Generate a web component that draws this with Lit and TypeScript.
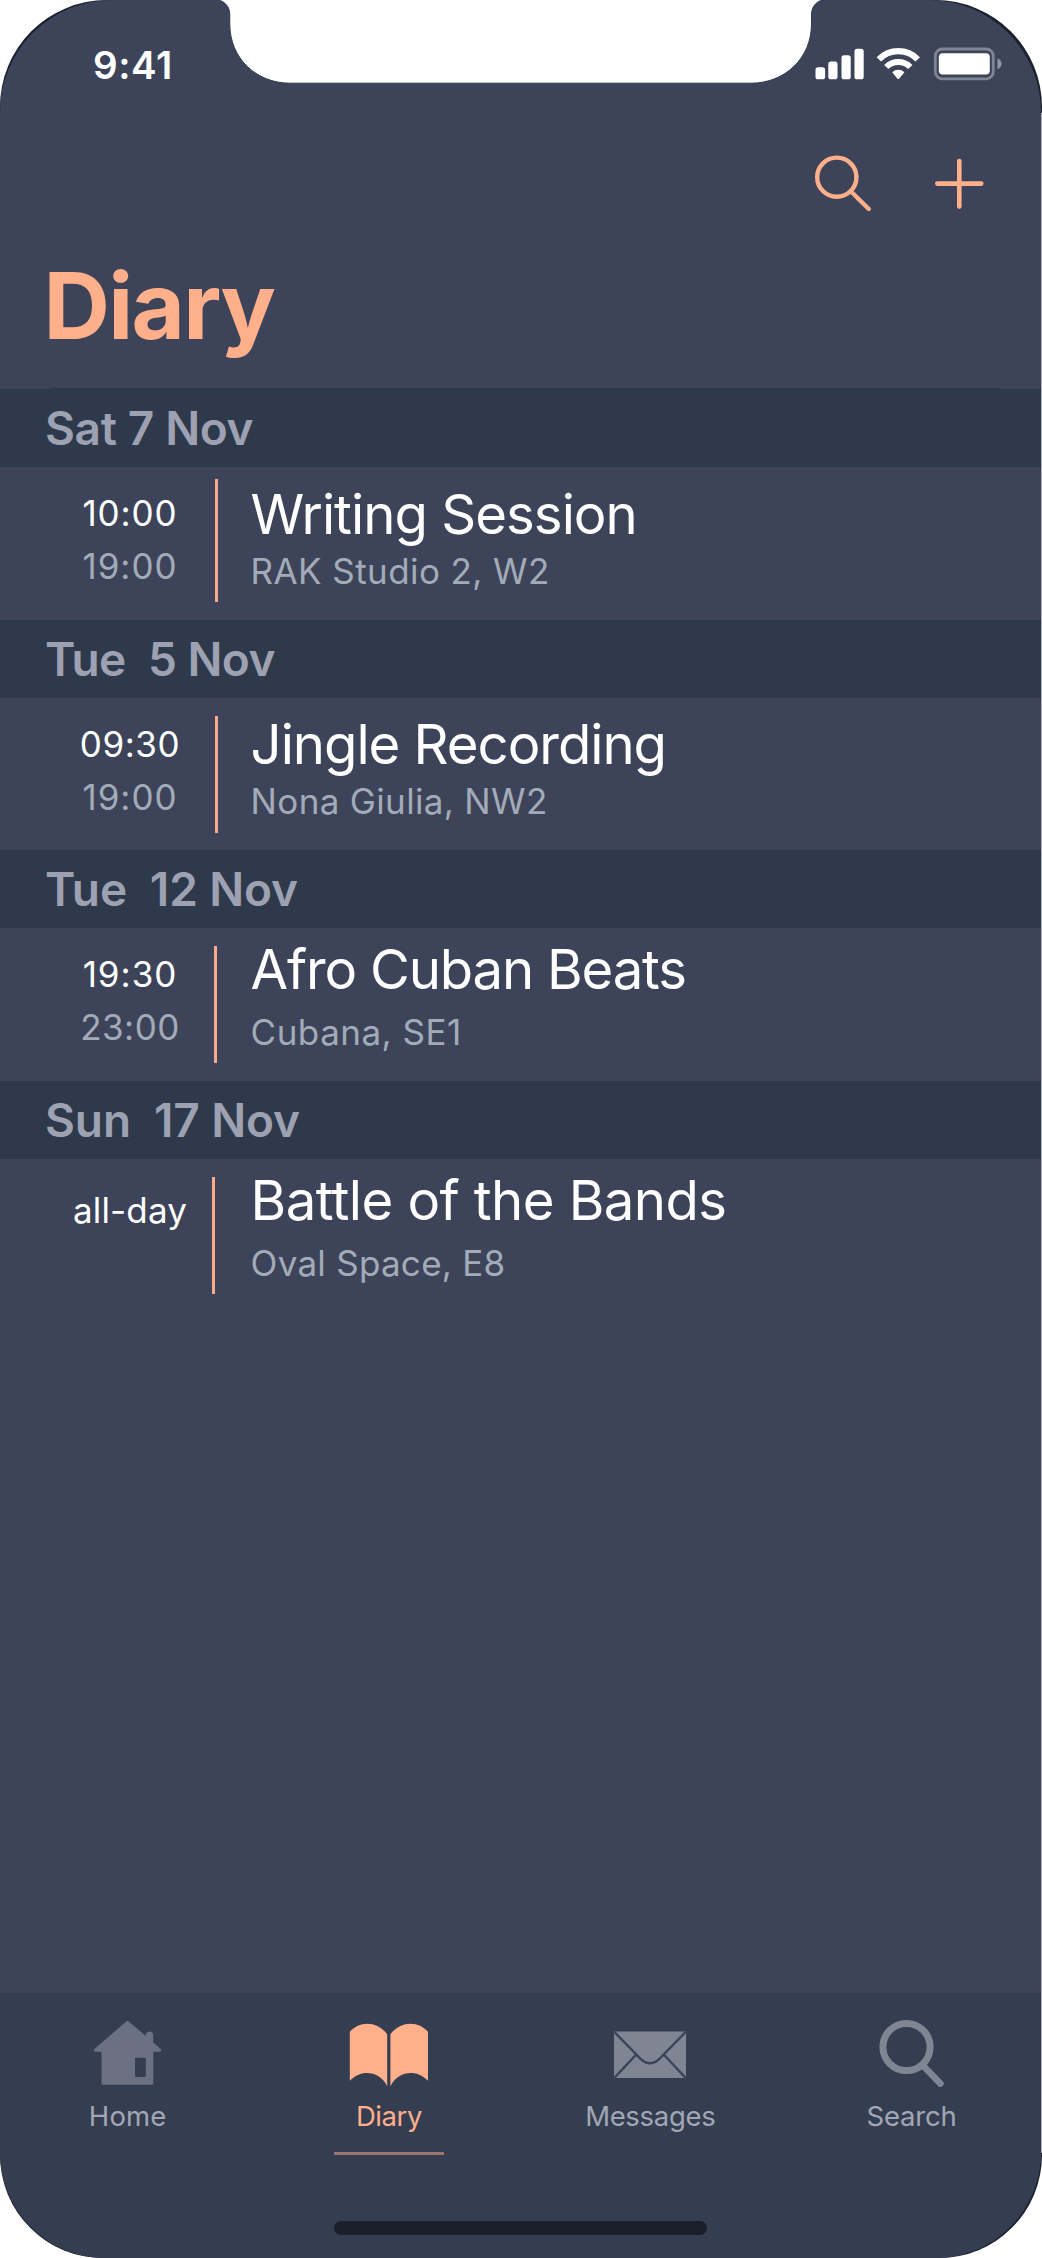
import { LitElement, html, css, svg } from "lit";
import { customElement, property } from "lit/decorators.js";
import { styleMap } from "lit/directives/style-map.js";

interface Label {
  text: string;
  /** letter spacing in px */
  track: number;
}

interface Entry {
  kind: "tall" | "first-tue" | "second-tue" | "all-day";
  date: Label;
  times: Label[];
  title: Label;
  place: Label;
}

const ENTRIES: Entry[] = [
  {
    kind: "tall",
    date: { text: "Sat 7 Nov", track: -0.34 },
    times: [{ text: "10:00", track: 0.9 }, { text: "19:00", track: 1 }],
    title: { text: "Writing Session", track: -0.97 },
    place: { text: "RAK Studio 2, W2", track: 0.42 },
  },
  {
    kind: "first-tue",
    date: { text: "Tue  5 Nov", track: -0.52 },
    times: [{ text: "09:30", track: 0.6 }, { text: "19:00", track: 1 }],
    title: { text: "Jingle Recording", track: -1.03 },
    place: { text: "Nona Giulia, NW2", track: 0.34 },
  },
  {
    kind: "second-tue",
    date: { text: "Tue  12 Nov", track: -0.13 },
    times: [{ text: "19:30", track: 1 }, { text: "23:00", track: 0.5 }],
    title: { text: "Afro Cuban Beats", track: -1.18 },
    place: { text: "Cubana, SE1", track: 0.5 },
  },
  {
    kind: "all-day",
    date: { text: "Sun  17 Nov", track: -0.1 },
    times: [{ text: "all-day", track: 0.17 }],
    title: { text: "Battle of the Bands", track: -0.58 },
    place: { text: "Oval Space, E8", track: 0.27 },
  },
];

const tracked = (l: Label) => styleMap({ letterSpacing: `${l.track}px` });

@customElement("status-bar")
export class StatusBar extends LitElement {
  static styles = css`
    :host {
      display: flex;
      justify-content: space-between;
      height: 60px;
      padding: 40px 35px 0 93px;
    }
    .time {
      font-size: 38.5px;
      line-height: 50px;
      font-weight: 600;
      letter-spacing: 0.56px;
      color: #fff;
    }
    svg {
      display: block;
      width: 196px;
      height: 40px;
      margin-top: 4px;
    }
  `;
  render() {
    return html`
      <span class="time">9:41</span>
      <svg viewBox="810 44 196 40" fill="#fff">
        <rect x="815.5" y="67.3" width="9.6" height="12" rx="2.6" />
        <rect x="828.3" y="61.5" width="9.2" height="17.8" rx="2.6" />
        <rect x="841.5" y="55.3" width="9.2" height="24" rx="2.6" />
        <rect x="854.5" y="48.7" width="9.2" height="30.6" rx="2.6" />
        <g fill="none" stroke="#fff">
          <path d="M878.9 59.3 A27.2 27.2 0 0 1 917.7 59.3" stroke-width="6.2" />
          <path d="M886.3 67 A16.9 16.9 0 0 1 910.3 67" stroke-width="6" />
        </g>
        <path d="M892.2 72.2 A9 9 0 0 1 904.4 72.2 L899.3 78.4 Q898.3 79.4 897.3 78.4 Z" />
        <rect x="935.3" y="49" width="58" height="29.8" rx="7" fill="none" stroke="#7f8594" stroke-width="2.8" />
        <rect x="938.8" y="53.2" width="51" height="21.4" rx="4" />
        <path d="M997.5 58.6 Q1001.5 60 1001.5 63.8 Q1001.5 67.6 997.5 69.2 Z" fill="#9397a4" />
      </svg>
    `;
  }
}

@customElement("diary-header")
export class DiaryHeader extends LitElement {
  static styles = css`
    :host {
      display: flex;
      flex-direction: column;
      height: 289px;
      color: #ffaf89;
    }
    .tools {
      display: flex;
      justify-content: flex-end;
      gap: 59px;
      padding: 50px 50px 0 0;
      height: 70px;
    }
    svg {
      display: block;
      width: 60px;
      height: 66px;
      fill: none;
      stroke: currentColor;
      stroke-linecap: round;
    }
    h1 {
      margin: 36px 0 0 43.6px;
      font-size: 92px;
      line-height: 100px;
      font-weight: 700;
      letter-spacing: -1.67px;
    }
    .divider {
      height: 1px;
      margin: auto 41px 0 50px;
      background: #2e394b;
    }
  `;
  render() {
    return html`
      <div class="tools">
        <svg viewBox="812 150 60 66" stroke-width="4.4">
          <circle cx="836.8" cy="177.2" r="19.6" />
          <path d="M851.5 192 L868.8 209" />
        </svg>
        <svg viewBox="931 150 60 66" stroke-width="4.6">
          <path d="M937.3 183.6 H981.3 M959.3 161 V206.6" />
        </svg>
      </div>
      <h1>Diary</h1>
      <div class="divider"></div>
    `;
  }
}

@customElement("diary-entry")
export class DiaryEntry extends LitElement {
  @property({ attribute: false }) entry!: Entry;
  static styles = css`
    :host {
      display: block;
    }
    .date {
      height: 78px;
      padding-left: 45px;
      background: #2e394b;
      color: #9da1b1;
      font-size: 46px;
      line-height: 78px;
      font-weight: 600;
      white-space: pre;
    }
    .body {
      display: grid;
      grid-template-columns: 140px 50.6px 1fr;
      padding-left: 60px;
      height: 153px;
    }
    .first-tue {
      height: 152px;
    }
    .times {
      padding-top: 19.5px;
      text-align: center;
      font-size: 35px;
      line-height: 53px;
      color: #a3abb8;
    }
    .times div:first-child {
      color: #fff;
    }
    .all-day .times {
      padding-top: 24.5px;
    }
    .rule {
      width: 3px;
      height: 117px;
      margin: 18px 0 0 15px;
      background: #fbab87;
    }
    .tall .rule {
      height: 123px;
      margin-top: 12px;
    }
    .second-tue .rule {
      margin-left: 14px;
    }
    .all-day .rule {
      margin-left: 12px;
    }
    .text {
      padding-top: 17px;
    }
    .first-tue .text {
      padding-top: 16px;
    }
    .second-tue .text,
    .all-day .text {
      padding-top: 11.4px;
    }
    .title {
      font-size: 54.5px;
      line-height: 60px;
      color: #fff;
      white-space: nowrap;
    }
    .place {
      margin-top: 4px;
      font-size: 35px;
      line-height: 46px;
      color: #a3abb8;
    }
    .second-tue .place,
    .all-day .place {
      margin-top: 9.5px;
    }
  `;
  render() {
    const e = this.entry;
    return html`
      <div class="date" style=${tracked(e.date)}>${e.date.text}</div>
      <div class="body ${e.kind}">
        <div class="times">
          ${e.times.map((t) => html`<div style=${tracked(t)}>${t.text}</div>`)}
        </div>
        <div class="rule"></div>
        <div class="text">
          <div class="title" style=${tracked(e.title)}>${e.title.text}</div>
          <div class="place" style=${tracked(e.place)}>${e.place.text}</div>
        </div>
      </div>
    `;
  }
}

const home = svg`
  <path fill="#6b7181" stroke="#6b7181" stroke-width="3" stroke-linejoin="round" fill-rule="evenodd"
    d="M127.5 2022.3 L95.5 2050.2 H103 V2083.2 H151.8 V2050.2 H159.6 L151.7 2043 V2034.5 Q149.5 2031.5 147.3 2034.5 V2039.3 Z" />
  <rect x="135" y="2057.8" width="10.8" height="19.2" rx="0.8" fill="#353d51" />`;

const book = svg`
  <path fill="#ffaf89" d="M349.8 2031.8 C359 2020.8 377 2020.3 387.2 2034.2 V2086.2 C379 2070.3 361 2069.2 349.8 2080.8 Z" />
  <path fill="#ffaf89" d="M428 2031.8 C418.8 2020.8 400.8 2020.3 390.4 2034.2 V2086.2 C398.8 2070.3 416.8 2069.2 428 2080.8 Z" />`;

const mail = svg`
  <rect x="614" y="2031.6" width="72" height="46.4" rx="1.4" fill="#7f8593" />
  <g fill="none" stroke="#3d4459" stroke-width="2.4">
    <path d="M614.6 2032.2 L640.3 2058.6 Q650 2067.8 659.7 2058.6 L685.4 2032.2" />
    <path d="M635.8 2055 L614.6 2077.6 M664.2 2055 L685.4 2077.6" />
  </g>`;

const search = svg`
  <g fill="none" stroke="#7f8593" stroke-linecap="round">
    <circle cx="905.5" cy="2047" r="23.6" stroke-width="7" />
    <path d="M921.5 2065 L939.4 2083.6" stroke-width="6.6" />
  </g>`;

const TABS = [
  { text: "Home", track: 0.16, icon: home, box: "88 2013 80 80", active: false },
  { text: "Diary", track: -0.43, icon: book, box: "349 2013 80 80", active: true },
  { text: "Messages", track: -0.32, icon: mail, box: "610 2013 80 80", active: false },
  { text: "Search", track: -0.2, icon: search, box: "871 2013 80 80", active: false },
];

@customElement("tab-bar")
export class TabBar extends LitElement {
  static styles = css`
    :host {
      display: flex;
      flex-direction: column;
      height: 265px;
      background: #353d51;
    }
    nav {
      display: grid;
      grid-template-columns: repeat(4, 261.3px);
      margin-left: -3px;
    }
    .tab {
      display: flex;
      flex-direction: column;
      align-items: center;
      padding-top: 20px;
      color: #a1a7b4;
      font-size: 27.5px;
      line-height: 40px;
    }
    svg {
      display: block;
      width: 80px;
      height: 80px;
      margin-bottom: 3px;
      overflow: visible;
    }
    .active {
      color: #ffaf89;
    }
    .active::after {
      content: "";
      width: 110px;
      height: 3px;
      margin-top: 16px;
      background: #98766f;
    }
    .indicator {
      width: 373px;
      height: 14px;
      margin: auto auto 23px;
      border-radius: 7px;
      background: #1a1f29;
    }
  `;
  render() {
    return html`
      <nav>
        ${TABS.map(
          (t) => html`<div class="tab ${t.active ? "active" : ""}">
            <svg viewBox=${t.box}>${t.icon}</svg>
            <span style=${tracked(t)}>${t.text}</span>
          </div>`
        )}
      </nav>
      <div class="indicator"></div>
    `;
  }
}

@customElement("app-root")
export class AppRoot extends LitElement {
  static styles = css`
    :host {
      display: block;
      width: 1042px;
      height: 2258px;
      background: #fff;
      font-family: Inter, "Liberation Sans", sans-serif;
    }
    .phone {
      position: relative;
      box-sizing: border-box;
      height: 2258px;
      border-radius: 107px 107px 103px 103px;
      background: #1a202c;
      overflow: hidden;
    }
    .screen {
      display: flex;
      flex-direction: column;
      width: 1041px;
      height: 2258px;
      border-radius: 112px 112px 106px 106px;
      background: #3d4459;
      overflow: hidden;
    }
    .edge {
      position: absolute;
      top: 113px;
      right: 0;
      width: 1px;
      height: 2040px;
      background: #a9acb6;
    }
    .notch {
      position: absolute;
      top: 0;
      left: 210px;
      width: 620px;
      height: 85px;
    }
    tab-bar {
      margin-top: auto;
    }
  `;
  render() {
    return html`
      <div class="phone">
        <div class="screen">
          <status-bar></status-bar>
          <diary-header></diary-header>
          ${ENTRIES.map((e) => html`<diary-entry .entry=${e}></diary-entry>`)}
          <tab-bar></tab-bar>
        </div>
        <div class="edge"></div>
        <svg class="notch" viewBox="210 0 620 85">
          <path
            fill="#fff"
            stroke="#2f394b"
            stroke-width="1"
            d="M214 -1 C224 0 229.8 6 229.8 15 V24 C229.8 58 256 83.2 290 83.2 H751 C785 83.2 811.5 58 811.5 24 V15 C811.5 6 817 0 827 -1 Z"
          />
        </svg>
      </div>
    `;
  }
}
